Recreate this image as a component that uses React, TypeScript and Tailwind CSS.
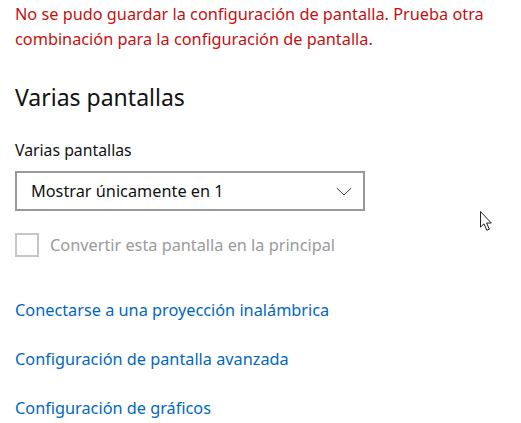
import React from "react";

export default function App() {
  return (
    <div
      className="relative w-[521px] h-[423px] bg-white overflow-hidden pl-[15px]"
      style={{ fontFamily: '"Noto Sans", "Open Sans", sans-serif' }}
    >
      <div className="pt-[2px] text-[16.3px] leading-[25px] text-[#c50f0f] whitespace-nowrap">
        No se pudo guardar la configuración de pantalla. Prueba otra
        <br />
        combinación para la configuración de pantalla.
      </div>

      <div className="mt-[30px] text-[23px] leading-[30px] text-[#111]">Varias pantallas</div>

      <div className="mt-[28px] text-[15.8px] leading-[20px] text-[#111]">Varias pantallas</div>

      <div className="mt-[11px] w-[350px] h-[40px] border-2 border-[#999] flex items-center justify-between pl-[14px] pr-[10px]">
        <span className="text-[16.3px] text-[#111]">Mostrar únicamente en 1</span>
        <svg width="16" height="9" viewBox="0 0 16 9" className="mr-[1px]">
          <path d="M0.8 1 L8 8 L15.2 1" fill="none" stroke="#444" strokeWidth="1" />
        </svg>
      </div>

      <div className="mt-[22px] flex items-center gap-[11px]">
        <div className="w-[24px] h-[24px] border-2 border-[#c6c6c6]" />
        <span className="text-[16.3px] text-[#9a9a9a]">Convertir esta pantalla en la principal</span>
      </div>

      <div className="mt-[41px] flex flex-col gap-[24px] text-[16.3px] leading-[25px] text-[#0067c0]">
        <span>Conectarse a una proyección inalámbrica</span>
        <span>Configuración de pantalla avanzada</span>
        <span>Configuración de gráficos</span>
      </div>

      <svg
        className="absolute left-[480px] top-[211px]"
        width="14"
        height="22"
        viewBox="0 0 14 22"
      >
        <path
          d="M0.5 0.5 L0.5 16 L4 12.8 L6.8 19.3 L9.3 18.2 L6.6 12 L11.3 12 Z"
          fill="white"
          stroke="#222"
          strokeWidth="1"
          strokeLinejoin="miter"
        />
      </svg>
    </div>
  );
}
